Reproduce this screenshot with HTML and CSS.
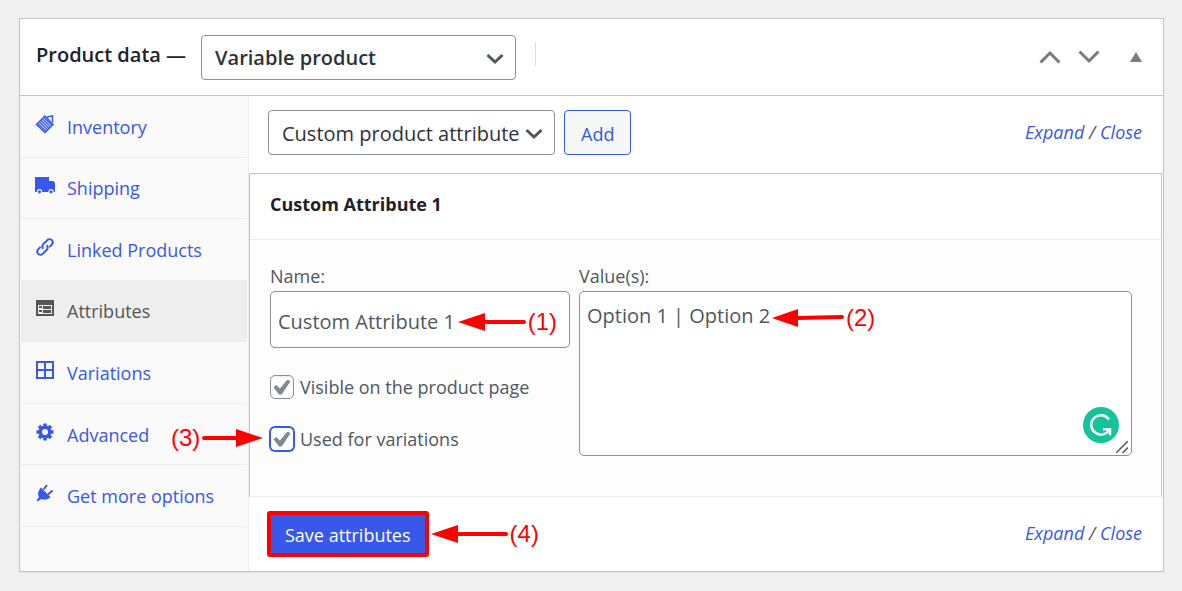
FILE: index.html
```html
<!DOCTYPE html>
<html lang="en">
  <head>
    <meta charset="UTF-8" />
    <title>Product data</title>
    <link rel="stylesheet" href="styles.css">
  </head>
  <body>
    <section class="postbox">
      <header class="postbox-header">
        <label class="postbox-title" for="product-type">Product data —</label>
        <span class="select-wrap type-select">
          <select id="product-type">
            <option>Variable product</option>
          </select>
          <svg class="chevron" viewBox="0 0 18 12" aria-hidden="true"><path d="M1.500 2 9 9l7.500-7" /></svg>
        </span>
        <span class="divider"></span>
        <div class="handle-actions">
          <button class="handle" type="button" aria-label="Move up">
            <svg class="handle-arrow" viewBox="0 0 22 14"><path d="M1.500 12.500 11 3l9.500 9.500" /></svg>
          </button>
          <button class="handle" type="button" aria-label="Move down">
            <svg class="handle-arrow" viewBox="0 0 22 14"><path d="M1.500 1.500 11 11l9.500-9.500" /></svg>
          </button>
          <button class="handle toggle" type="button" aria-label="Toggle panel">
            <svg class="handle-toggle" viewBox="0 0 12 10"><path d="M6 0 12 10H0z" /></svg>
          </button>
        </div>
      </header>

      <div class="panel-wrap">
        <ul class="tabs">
          <li class="tab">
            <a href="#inventory">
              <svg class="tab-icon" viewBox="0 0 20 20">
                <path class="frame" d="M1.500 10.500 10 2l8 8.500-8 8z" />
                <path class="frame" d="M12 3l5.500-1v6.500" />
                <path class="hatch" d="M3 9.500l8 8M4.500 8l8 8M6 6.500l8 8M7.500 5l8 8M9 3.500l8 8" />
              </svg>
              Inventory
            </a>
          </li>
          <li class="tab">
            <a href="#shipping">
              <svg class="tab-icon" viewBox="0 0 20 20">
                <path d="M0 2h14v4h4.500L20 8v9H0z" />
                <circle class="hole" cx="4.500" cy="16.500" r="2.600" />
                <circle class="hole" cx="16" cy="16.500" r="2.600" />
                <circle cx="4.500" cy="16.800" r="1.600" />
                <circle cx="16" cy="16.800" r="1.600" />
              </svg>
              Shipping
            </a>
          </li>
          <li class="tab">
            <a href="#linked">
              <svg class="tab-icon" viewBox="0 0 20 20">
                <g class="line" transform="rotate(-45 10 10)">
                  <path d="M12.500 10A3.200 3.200 0 0 1 9 13.200H3.500a3.200 3.200 0 0 1 0-6.400H7" />
                  <path d="M7.500 10A3.200 3.200 0 0 1 11 6.800h5.500a3.200 3.200 0 0 1 0 6.400H13" />
                </g>
              </svg>
              Linked Products
            </a>
          </li>
          <li class="tab active">
            <a href="#attributes">
              <svg class="tab-icon" viewBox="0 0 20 20">
                <path fill-rule="evenodd" d="M1 2h18v16H1zM3 7v9h14V7z" />
                <path d="M4 8h3v2H4zM4 12h3v2H4zM8 8h8v3H8zM8 12h8v3H8z" />
              </svg>
              Attributes
            </a>
          </li>
          <li class="tab">
            <a href="#variations">
              <svg class="tab-icon" viewBox="0 0 20 20">
                <path class="line" d="M2 2h16v16H2zM10 2v16M2 10h16" />
              </svg>
              Variations
            </a>
          </li>
          <li class="tab">
            <a href="#advanced">
              <svg class="tab-icon" viewBox="0 0 20 20">
                <path class="teeth" d="M10 1.500v17M1.500 10h17M4 4l12 12M16 4 4 16" />
                <circle cx="10" cy="10" r="6.500" />
                <circle class="hole" cx="10" cy="10" r="3" />
              </svg>
              Advanced
            </a>
            <div class="note note-3">
              <span>(3)</span>
              <svg width="61" height="18" viewBox="0 0 61 18"><path class="shaft" d="M2 9h34" /><path d="M34 0v18l27-9z" /></svg>
            </div>
          </li>
          <li class="tab">
            <a href="#more">
              <svg class="tab-icon" viewBox="0 0 20 20">
                <path d="M6 4.500 15.500 14c-2.500 2.500-6.500 3.500-9 2L2.500 18.500l-1-1L4 14C2.500 11.500 3 7.500 6 4.500z" />
                <path class="line" d="m8.500 6.500 3.500-4.500M13 11.500l4.500-4" />
              </svg>
              Get more options
            </a>
          </li>
        </ul>

        <div class="attributes-panel">
          <div class="toolbar">
            <span class="select-wrap attribute-select">
              <select aria-label="Attribute type">
                <option>Custom product attribute</option>
              </select>
              <svg class="chevron" viewBox="0 0 18 12" aria-hidden="true"><path d="M1.500 2 9 9l7.500-7" /></svg>
            </span>
            <button class="button" type="button">Add</button>
            <span class="expand-close"><a href="#expand">Expand</a> / <a href="#close">Close</a></span>
          </div>

          <div class="attribute">
            <h3 class="attribute-title">Custom Attribute 1</h3>
            <div class="attribute-data">
              <div class="name-column">
                <label class="field-label" for="attribute-name">Name:</label>
                <div class="field">
                  <input class="text-input" id="attribute-name" type="text" value="Custom Attribute 1">
                  <div class="note note-1">
                    <svg width="68" height="18" viewBox="0 0 68 18"><path class="shaft" d="M66 9H25" /><path d="M27 0v18L0 9z" /></svg>
                    <span>(1)</span>
                  </div>
                </div>
                <label class="check-row"><input class="checkbox" type="checkbox" checked>Visible on the product page</label>
                <label class="check-row"><input class="checkbox focused" type="checkbox" checked>Used for variations</label>
              </div>
              <div class="value-column">
                <label class="field-label" for="attribute-values">Value(s):</label>
                <div class="field">
                  <textarea class="textarea" id="attribute-values">Option 1 | Option 2</textarea>
                  <div class="note note-2">
                    <svg width="72" height="18" viewBox="0 0 72 18"><path class="shaft" d="M70 8 25 9" /><path d="M26 0v18L0 9z" /></svg>
                    <span>(2)</span>
                  </div>
                  <svg class="writing-badge" viewBox="0 0 36 36" aria-hidden="true">
                    <circle cx="18" cy="18" r="18" />
                    <path class="badge-ring" d="M26 12.500A9.700 9.700 0 1 0 26.500 22.500" />
                    <path class="badge-ring" d="M20 22.300h7v6" />
                  </svg>
                  <svg class="grip" viewBox="0 0 12 12" aria-hidden="true"><path d="M0 12 12 0M6.500 12 12 6.500" /></svg>
                </div>
              </div>
            </div>
          </div>

          <div class="toolbar toolbar-bottom">
            <div class="save-wrap">
              <button class="button save" type="button">Save attributes</button>
              <div class="note note-4">
                <svg width="77" height="18" viewBox="0 0 77 18"><path class="shaft" d="M75 9H25" /><path d="M27 0v18L0 9z" /></svg>
                <span>(4)</span>
              </div>
            </div>
            <span class="expand-close"><a href="#expand">Expand</a> / <a href="#close">Close</a></span>
          </div>
        </div>
      </div>
    </section>
  </body>
</html>
```
FILE: styles.css
```css
* {
	box-sizing: border-box;
}
body {
	margin: 0;
	padding: 18px 18px 18px 19px;
	background: #f0f0f1;
	color: #50575e;
	font-family: "Segoe UI", "Open Sans", "Noto Sans", sans-serif;
	font-size: 18px;
	line-height: 24px;
}
a {
	color: #3858e9;
	text-decoration: none;
}
button, input, select, textarea {
	font: inherit;
	color: inherit;
}
svg {
	display: block;
}
.postbox {
	background: #fff;
	border: 1px solid #c3c4c7;
	box-shadow: 0 1px 1px rgba(0, 0, 0, .04);
}

/* header */
.postbox-header {
	display: flex;
	align-items: center;
	height: 77px;
	padding: 0 21px 0 16px;
	border-bottom: 1px solid #c3c4c7;
}
.postbox-title {
	color: #1d2327;
	font-size: 20px;
	font-weight: 600;
	padding-bottom: 4px;
}
.select-wrap {
	position: relative;
	color: #2c3338;
	font-size: 20px;
}
.select-wrap select {
	appearance: none;
	width: 100%;
	height: 45px;
	padding: 2px 30px 0 13px;
	border: 1px solid #8c8f94;
	border-radius: 4px;
	background: #fff;
}
.type-select {
	width: 315px;
	margin-left: 15px;
	font-weight: 600;
}
.chevron {
	position: absolute;
	right: 12px;
	top: 18px;
	width: 18px;
	height: 12px;
	fill: none;
	stroke: #50575e;
	stroke-width: 3;
}
.divider {
	width: 1px;
	height: 24px;
	margin: 0 0 6px 19px;
	background: #dcdcde;
}
.handle-actions {
	display: flex;
	align-items: center;
	gap: 17px;
	margin-left: auto;
}
.handle {
	padding: 0;
	border: 0;
	background: none;
}
.toggle {
	margin-left: 13px;
}
.handle-arrow {
	width: 22px;
	height: 14px;
	fill: none;
	stroke: #787c82;
	stroke-width: 3;
}
.handle-toggle {
	width: 12px;
	height: 10px;
	fill: #787c82;
}

/* tabs */
.panel-wrap {
	display: grid;
	grid-template-columns: 229px 1fr;
}
.tabs {
	display: grid;
	grid-auto-rows: 1fr;
	margin: 0;
	padding: 0 1px 44px;
	border-right: 1px solid #eee;
	background: #fafafa;
	list-style: none;
}
.tab {
	position: relative;
	border-bottom: 1px solid #eee;
}
.tab a {
	display: flex;
	align-items: center;
	gap: 12px;
	height: 100%;
	padding: 1px 0 0 14px;
}
.tab.active {
	background: #eee;
}
.tab.active a {
	color: #555;
}
.tab-icon {
	width: 20px;
	height: 20px;
	margin-bottom: 6px;
	fill: currentColor;
}
.tab-icon .line {
	fill: none;
	stroke: currentColor;
	stroke-width: 2;
}
.tab-icon .teeth {
	stroke: currentColor;
	stroke-width: 3.500;
}
.tab-icon .frame {
	fill: none;
	stroke: currentColor;
	stroke-width: 1.500;
}
.tab-icon .hatch {
	stroke: currentColor;
	stroke-width: 1.400;
}
.tab-icon .hole {
	fill: #fafafa;
}

/* attributes */
.toolbar {
	display: flex;
	align-items: center;
	height: 77px;
	padding: 0 21px 4px 19px;
}
.attribute-select {
	width: 287px;
}
.button {
	height: 45px;
	margin-left: 9px;
	padding: 2px 16px 0;
	border: 1px solid #3858e9;
	border-radius: 4px;
	background: #f6f7f7;
	color: #3858e9;
}
.expand-close {
	margin-left: auto;
	padding-bottom: 2px;
	font-style: italic;
}
.attribute {
	margin-right: 1px;
	border: 1px solid #c3c4c7;
	border-bottom-color: #eee;
}
.attribute-title {
	margin: 0;
	padding: 18px 20px 23px;
	border-bottom: 1px solid #eee;
	color: #1d2327;
	font-size: 18px;
	font-weight: 700;
	line-height: 24px;
}
.attribute-data {
	display: grid;
	grid-template-columns: 300fr 553fr;
	gap: 9px;
	padding: 24px 29px 31px 20px;
	background: #fdfdfd;
}
.field-label {
	display: block;
	height: 27px;
}
.field {
	position: relative;
}
.text-input,
.textarea {
	display: block;
	width: 100%;
	border: 1px solid #8c8f94;
	border-radius: 5px;
	background: #fff;
	font-size: 20px;
}
.text-input {
	height: 57px;
	padding: 3px 7px 0;
	margin-bottom: 13px;
}
.textarea {
	height: 165px;
	padding: 12px 7px;
	resize: none;
}
.check-row {
	display: flex;
	align-items: center;
	gap: 6px;
	height: 52px;
}
.checkbox {
	appearance: none;
	display: grid;
	place-items: center;
	width: 24px;
	height: 24px;
	margin: 0;
	border: 1px solid #8c8f94;
	border-radius: 5px;
	background: #fff;
	box-shadow: inset 0 1px 2px rgba(0, 0, 0, .1);
}
.checkbox:checked::before {
	content: "";
	width: 17px;
	height: 15px;
	background: #7e8993;
	clip-path: polygon(0 52%, 15% 36%, 38% 60%, 82% 0, 100% 12%, 48% 100%, 32% 100%);
}
.checkbox.focused {
	border-color: #3858e9;
	box-shadow: 0 0 0 1px #3858e9;
}
.writing-badge {
	position: absolute;
	right: 13px;
	bottom: 13px;
	width: 36px;
	height: 36px;
	fill: #15c39a;
}
.badge-ring {
	fill: none;
	stroke: #fff;
	stroke-width: 2.500;
}
.grip {
	position: absolute;
	right: 4px;
	bottom: 3px;
	width: 12px;
	height: 12px;
	stroke: #50575e;
	stroke-width: 1.500;
}
.toolbar-bottom {
	height: 74px;
	padding: 0 21px 0 18px;
}
.save-wrap {
	position: relative;
}
.button.save {
	display: block;
	height: 46px;
	margin: 0;
	padding: 2px 14px 0;
	border: 4px solid #f00;
	border-radius: 3px;
	background: #3858e9;
	color: #fff;
}

/* red callouts */
.note {
	position: absolute;
	display: flex;
	align-items: center;
	gap: 2px;
	color: #f00;
	font-family: "Liberation Sans", Arial, sans-serif;
	font-size: 24px;
	white-space: nowrap;
	pointer-events: none;
}
.note svg {
	fill: #f00;
}
.note .shaft {
	stroke: #f00;
	stroke-width: 4;
	stroke-linecap: round;
}
.note-1 {
	right: 13px;
	top: 19px;
}
.note-2 {
	left: 193px;
	top: 15px;
}
.note-3 {
	z-index: 1;
	left: 150px;
	top: 22px;
}
.note-4 {
	left: 100%;
	top: 11px;
	margin-left: 2px;
}
```
